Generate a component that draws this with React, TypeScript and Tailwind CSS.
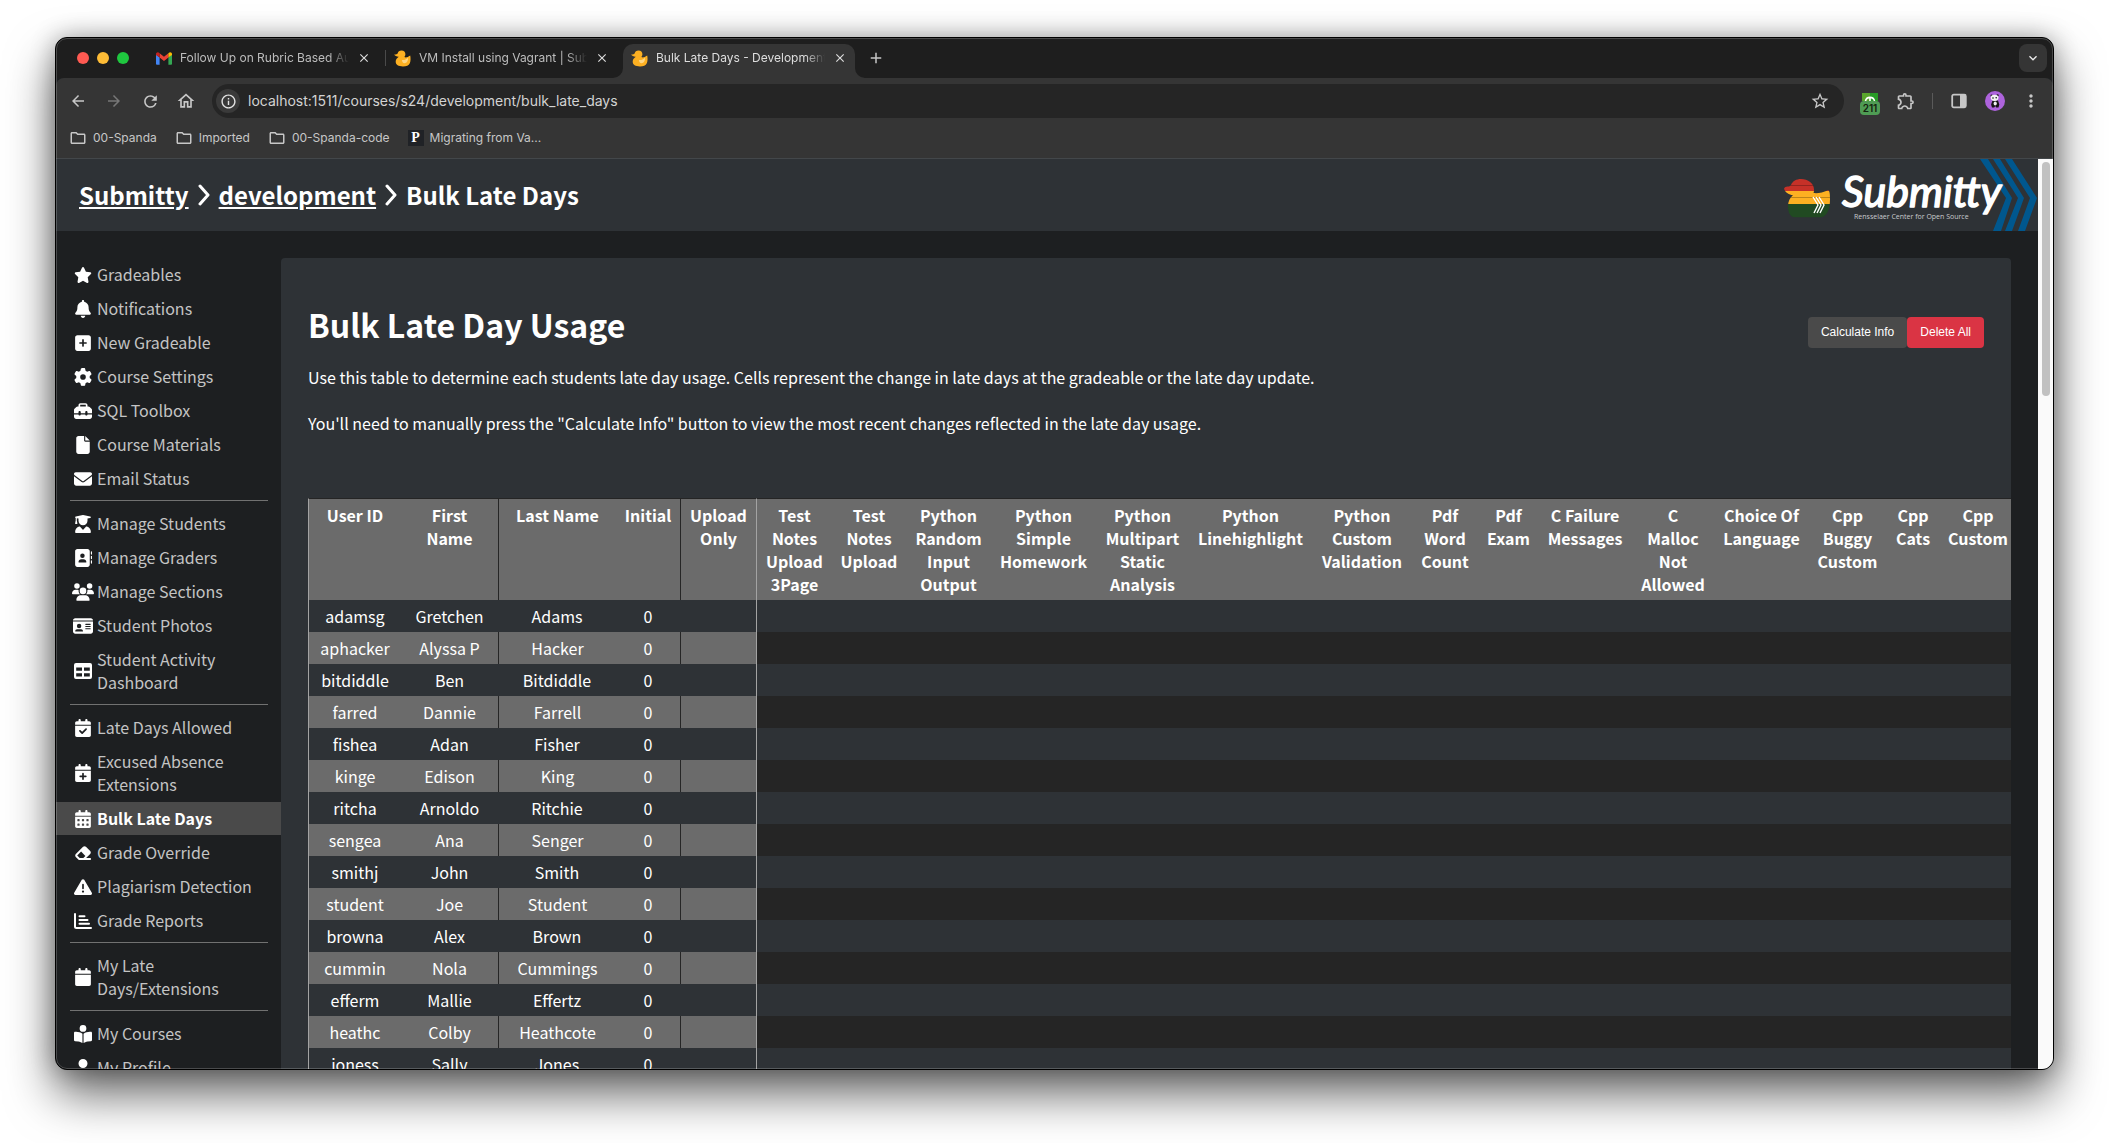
import type { ReactNode } from "react";
import {
  FaStar, FaBell, FaSquarePlus, FaGear, FaToolbox, FaFile, FaEnvelope, FaUserGraduate, FaAddressBook,
  FaUsers, FaIdCard, FaCalendarCheck, FaCalendarPlus, FaCalendarDays, FaEraser,
  FaTriangleExclamation, FaCalendar, FaBookOpenReader, FaUser,
} from "react-icons/fa6";
import {
  MdArrowBack, MdArrowForward, MdRefresh, MdOutlineHome, MdInfoOutline, MdStarOutline, MdOutlineExtension,
  MdMoreVert, MdClose, MdAdd, MdExpandMore, MdOutlineFolder,
} from "react-icons/md";

type Item = { icon: ReactNode; label: string; active?: boolean };

const groups: Item[][] = [
  [
    { icon: <FaStar size={18} />, label: "Gradeables" },
    { icon: <FaBell size={18} />, label: "Notifications" },
    { icon: <FaSquarePlus size={18} />, label: "New Gradeable" },
    { icon: <FaGear size={18} />, label: "Course Settings" },
    { icon: <FaToolbox size={18} />, label: "SQL Toolbox" },
    { icon: <FaFile size={18} />, label: "Course Materials" },
    { icon: <FaEnvelope size={18} />, label: "Email Status" },
  ],
  [
    { icon: <FaUserGraduate size={18} />, label: "Manage Students" },
    { icon: <FaAddressBook size={18} />, label: "Manage Graders" },
    { icon: <FaUsers size={22} />, label: "Manage Sections" },
    { icon: <FaIdCard size={20} />, label: "Student Photos" },
    { icon: <TableIcon />, label: "Student Activity Dashboard" },
  ],
  [
    { icon: <FaCalendarCheck size={18} />, label: "Late Days Allowed" },
    { icon: <FaCalendarPlus size={18} />, label: "Excused Absence Extensions" },
    { icon: <FaCalendarDays size={18} />, label: "Bulk Late Days", active: true },
    { icon: <FaEraser size={18} />, label: "Grade Override" },
    { icon: <FaTriangleExclamation size={18} />, label: "Plagiarism Detection" },
    { icon: <ChartIcon />, label: "Grade Reports" },
  ],
  [{ icon: <FaCalendar size={18} />, label: "My Late Days/Extensions" }],
  [
    { icon: <FaBookOpenReader size={18} />, label: "My Courses" },
    { icon: <FaUser size={18} />, label: "My Profile" },
  ],
];

const columns: { label: string; width: number }[] = [
  { label: "User ID", width: 93 },
  { label: "First Name", width: 97 },
  { label: "Last Name", width: 118 },
  { label: "Initial", width: 64 },
  { label: "Upload Only", width: 77 },
  { label: "Test Notes Upload 3Page", width: 75 },
  { label: "Test Notes Upload", width: 74 },
  { label: "Python Random Input Output", width: 85 },
  { label: "Python Simple Homework", width: 105 },
  { label: "Python Multipart Static Analysis", width: 93 },
  { label: "Python Linehighlight", width: 123 },
  { label: "Python Custom Validation", width: 100 },
  { label: "Pdf Word Count", width: 66 },
  { label: "Pdf Exam", width: 61 },
  { label: "C Failure Messages", width: 92 },
  { label: "C\nMalloc Not Allowed", width: 84 },
  { label: "Choice Of Language", width: 93 },
  { label: "Cpp Buggy Custom", width: 79 },
  { label: "Cpp Cats", width: 52 },
  { label: "Cpp Custom", width: 78 },
];
const tableWidth = columns.reduce((sum, c) => sum + c.width, 0);

const students: [string, string, string][] = [
  ["adamsg", "Gretchen", "Adams"],
  ["aphacker", "Alyssa P", "Hacker"],
  ["bitdiddle", "Ben", "Bitdiddle"],
  ["farred", "Dannie", "Farrell"],
  ["fishea", "Adan", "Fisher"],
  ["kinge", "Edison", "King"],
  ["ritcha", "Arnoldo", "Ritchie"],
  ["sengea", "Ana", "Senger"],
  ["smithj", "John", "Smith"],
  ["student", "Joe", "Student"],
  ["browna", "Alex", "Brown"],
  ["cummin", "Nola", "Cummings"],
  ["efferm", "Mallie", "Effertz"],
  ["heathc", "Colby", "Heathcote"],
  ["joness", "Sally", "Jones"],
];

function TableIcon() {
  return (
    <svg width="18" height="18" viewBox="0 0 18 18" aria-hidden="true">
      <path
        fill="currentColor"
        fillRule="evenodd"
        d="M2 1h14a2 2 0 0 1 2 2v12a2 2 0 0 1-2 2H2a2 2 0 0 1-2-2V3a2 2 0 0 1 2-2zM2.2 5.500v3.200H8V5.500zM10 5.500v3.200h5.800V5.500zM2.2 11.200v3.200H8v-3.200zM10 11.200v3.200h5.800v-3.200z"
      />
    </svg>
  );
}

function ChartIcon() {
  return (
    <svg width="18" height="18" viewBox="0 0 18 18" fill="none" stroke="currentColor" strokeWidth="2" strokeLinecap="round" aria-hidden="true">
      <path d="M1 2v12.500a1.500 1.500 0 0 0 1.500 1.500H17M5.500 4.200h5M5.500 8h8M5.500 11.800h9.500" />
    </svg>
  );
}

function DuckIcon() {
  return (
    <svg width="17" height="17" viewBox="0 0 17 17" aria-hidden="true" className="shrink-0">
      <path
        fill="#fdb022"
        d="M7.500.6c2.500 0 3.900 1.700 3.900 3.600 0 1.300-.7 2.100-1 2.900 1.500.8 3.300.2 5.800-1.600.5 2.300.6 5.500-.4 7.800-1 2.200-3.400 3.200-6.800 3.200-4.600 0-7.300-1.500-7.300-4.900 0-2.400 1.500-3.600 3.100-4.900-1.700.2-3.700-.7-4.600-2.200 1.600.1 2.700-.2 3.400-1C4.100 1.900 5.300.6 7.500.6z"
      />
      <path fill="#ffd684" d="M8 10c2 .4 4-.3 6-2.200.2 3-1 5.400-3.600 5.400-1.500 0-2.400-1.300-2.400-3.200z" />
    </svg>
  );
}

function GmailIcon() {
  return (
    <svg width="16" height="13" viewBox="0 0 16 13" aria-hidden="true" className="shrink-0">
      <path fill="#4285f4" d="M0 2.500v9.300c0 .5.500 1 1 1h2.600V5.400z" />
      <path fill="#34a853" d="M16 2.500v9.300c0 .5-.5 1-1 1h-2.600V5.400z" />
      <path fill="#ea4335" d="M3.600 1.300 8 4.700l4.400-3.400v4.300L8 9 3.600 5.600z" />
      <path fill="#c5221f" d="M0 2.200C0 .4 2 -.3 3.300.9l.3.300v4.400L0 2.900z" />
      <path fill="#fbbc04" d="M16 2.200C16 .4 14-.3 12.700.9l-.3.300v4.400L16 2.900z" />
    </svg>
  );
}

function Tab({ icon, title, active }: { icon: ReactNode; title: string; active?: boolean }) {
  return (
    <div
      className={
        active
          ? "relative flex h-[34px] w-[232px] items-center gap-2 rounded-t-[10px] bg-[#353535] pb-1.5 pl-2 pr-2 text-[#dedede]"
          : "relative flex h-[34px] w-[237px] items-center gap-2 pb-1.5 pl-2 pr-3.5 text-[#bdbdbd]"
      }
    >
      {active && (
        <svg className="absolute -left-2.5 bottom-0" width="252" height="10" viewBox="0 0 252 10" aria-hidden="true">
          <path fill="#353535" d="M0 10a10 10 0 0 0 10-10v10zM252 10a10 10 0 0 1-10-10v10z" />
        </svg>
      )}
      {icon}
      <span className="min-w-0 flex-1 overflow-hidden whitespace-nowrap text-[12px] mask-r-from-88%">{title}</span>
      <button aria-label={"Close " + title} className="text-[#dcdcdc]">
        <MdClose size={14} />
      </button>
    </div>
  );
}

function Bookmark({ icon, label }: { icon: ReactNode; label: string }) {
  return (
    <a href="#" className="flex items-center gap-1.5">
      {icon}
      {label}
    </a>
  );
}

function ToolButton({ label, dim, children }: { label: string; dim?: boolean; children: ReactNode }) {
  return (
    <button aria-label={label} className={dim ? "flex w-5 justify-center text-[#777777]" : "flex w-5 justify-center"}>
      {children}
    </button>
  );
}

function BrowserChrome() {
  return (
    <div className="shrink-0 font-[Inter,sans-serif] text-[#c7c7c7]">
      <div className="flex h-10 items-end bg-[#1e1e1e]">
        <div className="flex h-[34px] items-center gap-2 pb-1.5 pl-[21px]">
          <span className="size-3 rounded-full bg-[#ff5a52]" />
          <span className="size-3 rounded-full bg-[#febc36]" />
          <span className="size-3 rounded-full bg-[#1fc73f]" />
        </div>
        <div className="flex items-end pl-[19px]">
          <Tab icon={<GmailIcon />} title="Follow Up on Rubric Based AutoGrading" />
          <span className="mb-3 h-4 w-px bg-[#4a4a4a]" />
          <Tab icon={<DuckIcon />} title="VM Install using Vagrant | Submitty" />
          <Tab icon={<DuckIcon />} title="Bulk Late Days - Development" active />
        </div>
        <button aria-label="New tab" className="flex h-[34px] items-center pb-1.5 pl-3">
          <MdAdd size={18} />
        </button>
        <button aria-label="Search tabs" className="mb-1.5 ml-auto mr-1.5 flex size-7 items-center justify-center rounded-lg bg-[#353535] text-[#e6e6e6]">
          <MdExpandMore size={16} />
        </button>
      </div>
      <div className="rounded-t-lg bg-[#353535]">
        <div className="flex h-10 items-center gap-4 px-3 pt-1.5">
          <ToolButton label="Back"><MdArrowBack size={18} /></ToolButton>
          <ToolButton label="Forward" dim><MdArrowForward size={18} /></ToolButton>
          <ToolButton label="Reload"><MdRefresh size={19} /></ToolButton>
          <ToolButton label="Home"><MdOutlineHome size={20} /></ToolButton>
          <div className="flex h-[34px] min-w-0 flex-1 items-center rounded-full bg-[#252525] pl-1 pr-3.5">
            <span className="flex size-6 shrink-0 items-center justify-center rounded-full bg-[#3a3a3a] text-[#e3e3e3]">
              <MdInfoOutline size={17} />
            </span>
            <input
              aria-label="Address"
              defaultValue="localhost:1511/courses/s24/development/bulk_late_days"
              className="ml-2 min-w-0 flex-1 bg-transparent text-sm text-[#d3d3d3] outline-none"
            />
            <button aria-label="Bookmark this page"><MdStarOutline size={20} /></button>
          </div>
          <ToolButton label="Timer extension"><ClockBadge /></ToolButton>
          <ToolButton label="Extensions"><MdOutlineExtension size={20} /></ToolButton>
          <span className="h-4 w-px bg-[#5a5a5a]" />
          <ToolButton label="Side panel"><PanelIcon /></ToolButton>
          <ToolButton label="Profile"><PandaIcon /></ToolButton>
          <ToolButton label="Menu"><MdMoreVert size={20} /></ToolButton>
        </div>
        <div className="flex h-[41px] items-center gap-[18px] border-b border-[#43474a] pl-[13px] pb-px text-[12px]">
          <Bookmark icon={<MdOutlineFolder size={18} />} label="00-Spanda" />
          <Bookmark icon={<MdOutlineFolder size={18} />} label="Imported" />
          <Bookmark icon={<MdOutlineFolder size={18} />} label="00-Spanda-code" />
          <Bookmark
            icon={<span className="flex size-4 items-center justify-center bg-[#202226] font-['Liberation_Serif',serif] text-sm font-bold text-white">P</span>}
            label="Migrating from Va..."
          />
        </div>
      </div>
    </div>
  );
}

function ClockBadge() {
  return (
    <span className="flex w-5 flex-col items-center pt-1.5">
      <svg width="16" height="8" viewBox="0 0 16 8" aria-hidden="true">
        <rect width="8" height="8" fill="#5aa62c" />
        <rect x="8" width="8" height="8" fill="#279a26" />
        <path d="M3.500 8a4.600 4.600 0 0 1 9 0M8 4v4" fill="none" stroke="#fff" strokeWidth="1.600" />
      </svg>
      <span className="w-5 rounded bg-[#4f9c54] text-center text-[10px] font-semibold leading-[14px] text-[#13230f]">211</span>
    </span>
  );
}

function PanelIcon() {
  return (
    <svg width="16" height="16" viewBox="0 0 16 16" aria-hidden="true">
      <rect x="1.200" y="1.700" width="13.600" height="12.600" rx="1.500" fill="none" stroke="currentColor" strokeWidth="1.800" />
      <rect x="9" y="2" width="5.500" height="12" fill="currentColor" />
    </svg>
  );
}

function PandaIcon() {
  return (
    <svg width="20" height="20" viewBox="0 0 20 20" aria-hidden="true">
      <circle cx="10" cy="10" r="10" fill="#ad63dc" />
      <path d="M7.500 9.500h5.500l1.300 4-.8 3h-2.300l-1-1.600-1 1.600H7l-.9-3z" fill="#161616" />
      <ellipse cx="10.200" cy="12.500" rx="1.600" ry="2" fill="#eee" />
      <circle cx="6.600" cy="4.700" r="1.100" fill="#161616" />
      <circle cx="12.600" cy="4.300" r="1.100" fill="#161616" />
      <ellipse cx="9.600" cy="6.800" rx="3.900" ry="3.100" fill="#f4f4f4" />
      <circle cx="8" cy="7" r=".8" fill="#161616" />
      <circle cx="11.200" cy="6.800" r=".8" fill="#161616" />
    </svg>
  );
}

function Logo() {
  return (
    <svg width="260" height="72" viewBox="0 0 260 72" role="img" aria-label="Submitty, Rensselaer Center for Open Source" className="shrink-0">
      <defs>
        <clipPath id="duck">
          <path d="M23 20c7 0 13 4.500 13 10.500 0 1.500 0 2.500-.5 3.500 5 .5 9-.5 14.500-2.800 2 .5 2 5 2 9 0 10-3 18-10 18H17c-5 0-7-5-7-11 0-5 2-8.500 5-11-4-.5-7.500-2.500-9-6.500.5-1.500 2-2.200 3.500-2.200 1 .2 2.500-.3 3.500-1.500 1.500-4 5.500-6 10-6z" />
        </clipPath>
      </defs>
      <g fill="#00578e">
        <path d="M202 0h8l24 39-11 33h-8l13-33z" />
        <path d="M215 0h7l24 39-12 33h-7l13-33z" />
        <path d="M227 0h7l25 39-12 33h-7l12-33z" />
      </g>
      <g clipPath="url(#duck)">
        <rect x="0" y="18" width="56" height="14" fill="#c63128" />
        <rect x="0" y="32" width="56" height="13" fill="#fdb022" />
        <rect x="0" y="45" width="56" height="14" fill="#214a22" />
        <path d="M0 26.500h56M0 38.500h56" stroke="#00000040" />
      </g>
      <path d="M35 38l5 8-4 8M38 38l5 8-4 8M41 38l5 8-4 8" fill="none" stroke="#fff" strokeWidth="1.400" />
      <text x="64" y="48" fill="#fff" stroke="#fff" strokeWidth="1.500" strokeLinejoin="round" fontFamily="Lato, sans-serif" fontStyle="italic" fontWeight="400" fontSize="43">Submitty</text>
      <text x="76" y="60" fill="#c9cbce" fontFamily="Open Sans, sans-serif" fontSize="7">Rensselaer Center for Open Source</text>
    </svg>
  );
}

function Chevron() {
  return (
    <svg width="12" height="22" viewBox="0 0 12 22" fill="none" stroke="currentColor" strokeWidth="3" strokeLinecap="round" strokeLinejoin="round" aria-hidden="true">
      <path d="M2 2l8 9-8 9" />
    </svg>
  );
}

function Sidebar() {
  return (
    <nav aria-label="Course" className="w-[225px] shrink-0 overflow-hidden">
      {groups.map((items, g) => (
        <div key={g}>
          {g > 0 && <hr className="ml-3.5 mr-[13px] mb-[6px] mt-1 border-[#717171]" />}
          <ul className="flex flex-col gap-px pb-px">
            {items.map((item) => (
              <li key={item.label}>
                <a
                  href="#"
                  aria-current={item.active ? "page" : undefined}
                  className={
                    item.active
                      ? "flex items-center gap-[3px] bg-[#4a4a4a] py-[5px] pl-4 font-bold text-white"
                      : "flex items-center gap-[3px] py-[5px] pl-4 text-[#c4c4c4]"
                  }
                >
                  <span className="flex w-[22px] shrink-0 justify-center text-white">{item.icon}</span>
                  <span className="w-[170px]">{item.label}</span>
                </a>
              </li>
            ))}
          </ul>
        </div>
      ))}
    </nav>
  );
}

function dividers(col: number, even: boolean) {
  if (col === 0) return "border-l border-l-[#a3a3a3]";
  if (col === 4) return even ? "border-r border-r-[#a3a3a3] border-l border-l-[#252525]" : "border-r border-r-[#a3a3a3]";
  if (col === 2 && even) return "border-l border-l-[#252525]";
  return "";
}

function UsageTable() {
  return (
    <div className="overflow-hidden">
      <table className="table-fixed border-separate border-spacing-0 text-center" style={{ width: tableWidth }}>
        <colgroup>
          {columns.map((c) => (
            <col key={c.label} style={{ width: c.width }} />
          ))}
        </colgroup>
        <thead>
          <tr>
            {columns.map((c, i) => (
              <th
                key={c.label}
                scope="col"
                className={"whitespace-pre-line border-t border-t-[#252525] bg-[#6b6b6b] px-1.5 pt-[5px] pb-1 align-top font-bold " + dividers(i, true)}
              >
                {c.label}
              </th>
            ))}
          </tr>
        </thead>
        <tbody>
          {students.map(([id, first, last], r) => {
            const even = r % 2 === 1;
            const cells = [id, first, last, "0"];
            return (
              <tr key={id} className="h-8">
                {columns.map((c, i) => (
                  <td
                    key={c.label}
                    className={(even ? (i < 5 ? "bg-[#6b6b6b] " : "bg-[#252525] ") : "bg-[#2e3236] ") + dividers(i, even)}
                  >
                    {cells[i]}
                  </td>
                ))}
              </tr>
            );
          })}
        </tbody>
      </table>
    </div>
  );
}

export default function App() {
  return (
    <div className="h-screen overflow-hidden bg-white px-[55px] pt-[37px] pb-[73px]">
      <div className="relative flex h-full flex-col overflow-hidden rounded-xl border border-black bg-[#1d1f21] shadow-[0_24px_48px_rgba(0,0,0,0.6),0_0_24px_rgba(0,0,0,0.3)]">
        <BrowserChrome />
        <div className="flex min-h-0 flex-1 font-['Noto_Sans_CJK_JP',sans-serif] text-base leading-[23px] text-white">
          <div className="flex min-w-0 flex-1 flex-col">
            <header className="flex h-[72px] shrink-0 items-center justify-between bg-[#2e3236]">
              <nav aria-label="Breadcrumb" className="flex items-center gap-[9px] pl-[23px] text-2xl font-bold">
                <a href="#" className="underline">Submitty</a>
                <Chevron />
                <a href="#" className="underline">development</a>
                <Chevron />
                <span>Bulk Late Days</span>
              </nav>
              <Logo />
            </header>
            <div className="flex min-h-0 flex-1 pt-[27px]">
              <Sidebar />
              <main className="mr-[27px] min-w-0 flex-1 overflow-hidden rounded-t-sm bg-[#2e3236] pl-[27px]">
                <div className="flex items-start justify-between pr-[27px] pt-[46px]">
                  <h1 className="text-[32px] font-bold leading-10">Bulk Late Day Usage</h1>
                  <div className="flex pt-[13px] font-['Liberation_Sans',sans-serif] text-[12px] leading-[15px]">
                    <button className="rounded-sm bg-[#4a4a4a] px-[13px] py-2">Calculate Info</button>
                    <button className="rounded-sm bg-[#da3444] px-[13px] py-2">Delete All</button>
                  </div>
                </div>
                <p className="pt-[18px]">
                  Use this table to determine each students late day usage. Cells represent the change in late days at the gradeable or the late day update.
                </p>
                <p className="pt-[23px] pb-[63px]">
                  You'll need to manually press the "Calculate Info" button to view the most recent changes reflected in the late day usage.
                </p>
                <UsageTable />
              </main>
            </div>
          </div>
          <div className="w-[15px] shrink-0 bg-[#fafafa] pl-1 pt-[3px]">
            <div className="h-[234px] w-2 rounded-full bg-[#c1c1c1]" />
          </div>
        </div>
        <div className="pointer-events-none absolute inset-0 rounded-[11px] border border-white/20" />
      </div>
    </div>
  );
}
